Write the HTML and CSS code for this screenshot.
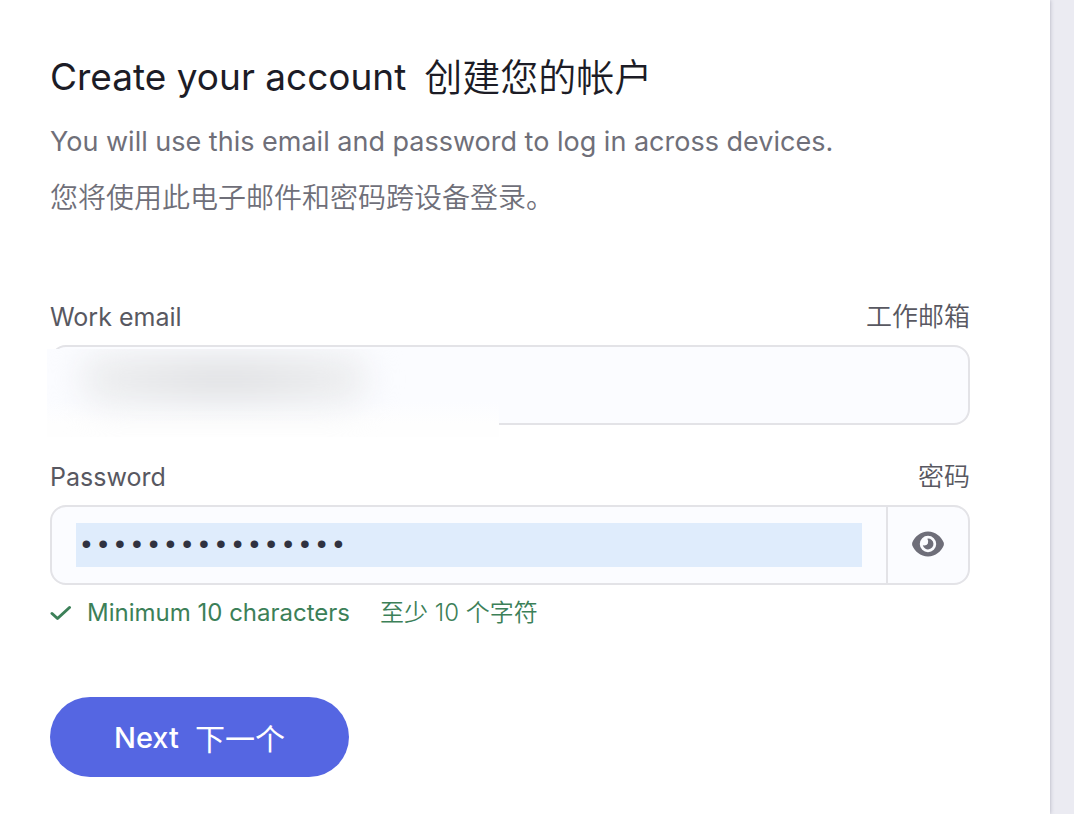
FILE: index.html
```
<!DOCTYPE html>
<html lang="en">
<head>
<meta charset="utf-8">
<meta name="viewport" content="width=device-width, initial-scale=1">
<title>Create your account</title>
<link rel="stylesheet" href="styles.css">
</head>
<body>
<main class="card">
  <form class="form">
    <header class="intro">
      <h1 class="title"><span>Create your account</span><span class="title-zh" lang="zh-CN">创建您的帐户</span></h1>
      <p class="lead">You will use this email and password to log in across devices.</p>
      <p class="lead lead-zh" lang="zh-CN">您将使用此电子邮件和密码跨设备登录。</p>
    </header>

    <div class="field">
      <label class="label" for="email"><span>Work email</span><span class="label-zh" lang="zh-CN">工作邮箱</span></label>
      <div class="box">
        <input class="input" id="email" type="email">
        <div class="redaction" aria-hidden="true"><div class="smudge"></div></div>
      </div>
    </div>

    <div class="field">
      <label class="label" for="password"><span>Password</span><span class="label-zh" lang="zh-CN">密码</span></label>
      <div class="box">
        <input class="input input-filled" id="password" type="password" value="abcdefghijklmnop" aria-describedby="hint">
        <button class="reveal" type="button" aria-label="Show password">
          <svg class="eye" viewBox="0 0 32 26" aria-hidden="true">
            <path fill="currentColor" fill-rule="evenodd" d="M16 .5C8.500.500 2.500 6 .3 11.500Q-.1 13 .3 14.500C2.500 20 8.500 25.500 16 25.500S29.500 20 31.700 14.500Q32.100 13 31.700 11.500C29.500 6 23.500.500 16 .5ZM16 4.800a8.200 8.200 0 1 1 0 16.400a8.200 8.200 0 0 1 0-16.400Z"/>
            <path fill="currentColor" d="M16 7.600a5.400 5.400 0 1 1-5.200 6.700q3.700.6 5-1.500q1.300-2.200-.4-5.100Z"/>
          </svg>
        </button>
      </div>
      <p class="hint" id="hint">
        <svg class="check" viewBox="0 0 22 18" aria-hidden="true"><path d="M2 9.500 7.500 14.500 19.500 3.500" fill="none" stroke="currentColor" stroke-width="3" stroke-linecap="round" stroke-linejoin="round"/></svg>
        <span>Minimum 10 characters</span>
        <span class="hint-zh" lang="zh-CN">至少 10 个字符</span>
      </p>
    </div>

    <button class="next" type="button"><span>Next</span><span class="next-zh" lang="zh-CN">下一个</span></button>
  </form>
</main>
</body>
</html>
```
FILE: styles.css
```
* {
  box-sizing: border-box;
}

body {
  margin: 0;
  min-height: 100vh;
  display: flex;
  padding-right: 24px;
  background: #ebebf2;
  font-family: Inter, "Noto Sans CJK SC", sans-serif;
  color: #1c1c26;
}

h1,
p {
  margin: 0;
}

[lang="zh-CN"] {
  font-weight: 350;
}

.card {
  flex: 1;
  padding: 49px 80px 36px 50px;
  background: #fff;
  box-shadow: 0 0 4px rgba(60, 60, 90, 0.35);
}

.title {
  display: flex;
  gap: 18px;
  margin-bottom: 9px;
  font-size: 37px;
  font-weight: 400;
  line-height: 56px;
}

.title-zh {
  font-size: 38px;
}

.lead {
  font-size: 27px;
  line-height: 56px;
  color: #6f6f79;
}

.lead-zh {
  font-size: 28px;
}

.intro {
  margin-bottom: 73px;
}

.field {
  margin-bottom: 34px;
}

.label {
  display: flex;
  justify-content: space-between;
  margin-bottom: 10px;
  font-size: 25px;
  line-height: 36px;
  color: #585861;
}

.label-zh {
  font-size: 26px;
}

.box {
  position: relative;
  display: flex;
  align-items: stretch;
  height: 80px;
  border: 2px solid #e3e3e7;
  border-radius: 16px;
  background: #fbfcff;
}

.input {
  flex: 1;
  min-width: 0;
  height: 44px;
  margin: 16px 24px;
  padding: 0 2px;
  border: 0;
  outline: 0;
  background: transparent;
  font-family: "Liberation Mono", monospace;
  font-size: 28px;
  color: #303240;
}

.input-filled {
  background: #dfecfc;
}

.redaction {
  position: absolute;
  top: 2px;
  left: -5px;
  width: 452px;
  height: 88px;
  overflow: hidden;
  background: linear-gradient(#fbfcff 60%, #fefefe 85%);
}

.smudge {
  width: 290px;
  height: 56px;
  margin: 2px 0 0 32px;
  border-radius: 28px;
  background: radial-gradient(closest-side, #dcdde0, #eeeff1);
  filter: blur(16px);
}

.reveal {
  display: grid;
  place-items: center;
  width: 82px;
  padding: 0 0 2px;
  border: 0;
  border-left: 2px solid #e3e3e7;
  background: transparent;
  color: #6e6e79;
}

.eye {
  width: 32px;
  height: 26px;
}

.hint {
  display: flex;
  align-items: center;
  margin-top: 10px;
  font-size: 24px;
  line-height: 36px;
  color: #3c8058;
}

.check {
  width: 22px;
  height: 18px;
  margin-right: 15px;
}

.hint-zh {
  margin-left: 30px;
}

.next {
  display: flex;
  align-items: center;
  gap: 16px;
  height: 80px;
  margin-top: 66px;
  padding: 0 64px;
  border: 0;
  border-radius: 40px;
  background: #5566e2;
  color: #fff;
  font-family: inherit;
  font-size: 29px;
  font-weight: 500;
}

.next-zh {
  font-size: 30px;
  font-weight: 400;
}
```
